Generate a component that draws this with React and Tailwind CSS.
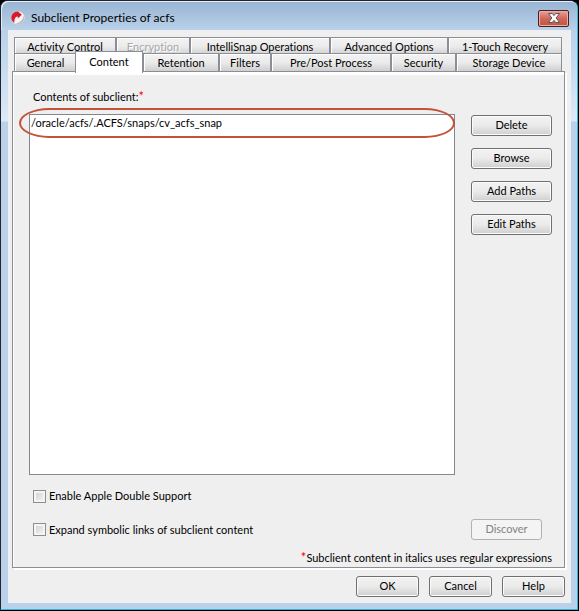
import React, { useState } from 'react';

const backTabs = ['Activity Control', 'Encryption', 'IntelliSnap Operations', 'Advanced Options', '1-Touch Recovery'];
const frontTabs = ['General', 'Content', 'Retention', 'Filters', 'Pre/Post Process', 'Security', 'Storage Device'];

function AppIcon() {
    return (
        <svg className="mt-[5px]" width="14" height="14" viewBox="0 0 14 14" aria-hidden="true">
            <circle cx="7" cy="7" r="6.6" fill="#f6f3f3" stroke="#cfd0d8" strokeWidth="0.5" />
            <path d="M4 13C6 14.2 10.6 13.8 12.6 10.4C13.6 8.4 13.4 6.2 12.4 4.6C12.2 8.8 9.2 11.6 4 13Z" fill="#c4bfc3" />
            <path d="M3.4 11.8C-0.6 9.8 -0.6 4.6 2.6 2C4 0.9 5.4 0.7 6.4 0.9V0L10.8 3.7L6.8 7.6V5.4C4.6 5.4 3 7.4 3.4 11.8Z" fill="#d9182a" />
        </svg>
    );
}

function CloseIcon() {
    return (
        <svg width="12" height="10" viewBox="0 0 12 10" aria-hidden="true">
            <path
                d="M0.5 0.5H4.2L6 2.6L7.8 0.5H11.5L8.2 5L11.5 9.5H7.8L6 7.4L4.2 9.5H0.5L3.8 5Z"
                fill="#fafafa"
                stroke="#5b5560"
                strokeWidth="1"
            />
        </svg>
    );
}

function Star() {
    return <span className="text-[13px] leading-none text-[#f00]">*</span>;
}

function PushButton({ children, className = '', disabled = false }) {
    const look = disabled
        ? 'border-[#adb2b5] bg-[#f4f4f4] text-[#838383]'
        : 'border-[#707070] bg-linear-to-b from-[#f2f2f2] from-0% via-[#ebebeb] via-49% to-[#cfcfcf] text-black shadow-[inset_0_0_0_1px_#fbfbfb]';
    return (
        <button
            type="button"
            disabled={disabled}
            className={`flex h-[21px] items-center justify-center rounded-[3px] border pb-px ${look} ${className}`}
        >
            {children}
        </button>
    );
}

function CheckBox({ children }) {
    return (
        <label className="flex items-center gap-[3px]">
            <input
                type="checkbox"
                className="size-[13px] appearance-none border border-[#8e8f8f] bg-linear-to-br from-[#cbcfd5] to-[#f6f6f6] shadow-[inset_0_0_0_2px_#f4f4f4] checked:bg-[#4a6a9a]"
            />
            {children}
        </label>
    );
}

function Tab({ name, active, disabled, onSelect }) {
    let look = 'border-t border-l-2 border-[#8c8e97] bg-linear-to-b from-[#f3f3f3] via-[#ebebeb] to-[#cfcfcf] pt-px shadow-[inset_1px_1px_0_#fff] first:border-l last:border-r';
    if (active) {
        look = 'relative z-10 -mx-px -mt-[2px] -mb-[2px] border border-b-0 border-[#8c8e97] bg-white pb-px';
    }
    return (
        <button
            type="button"
            role="tab"
            aria-selected={active}
            disabled={disabled}
            onClick={() => onSelect(name)}
            className={`flex items-center justify-center whitespace-nowrap disabled:text-[#a8a8a8] disabled:[text-shadow:1px_1px_0_#fff] ${look}`}
        >
            {name}
        </button>
    );
}

export default function App() {
    const [tab, setTab] = useState('Content');

    return (
        <div className="flex min-h-screen flex-col bg-black pr-px pb-px font-[Lato,sans-serif] text-[11px] leading-4 text-black [font-variant-ligatures:none]">
            <div className="flex grow flex-col rounded-t-lg border border-[#20242c] border-r-[#35b6cf] border-b-[#35b6cf] bg-[linear-gradient(#b9d1ea_30px,#dce9f8_120px,#b9d1ea_121px)] pr-[6px] pb-[6px] pl-[7px]">
                {/* Title bar */}
                <header className="-mr-[6px] -ml-[7px] flex h-[29px] items-center rounded-t-[7px] bg-linear-to-b from-[#98b4d2] to-[#b9d1ea] pr-[8px] pl-[10px] shadow-[inset_1px_1px_0_#e4eefa]">
                    <AppIcon />
                    <h1 className="ml-[6px] grow pt-1 text-[12px]">Subclient Properties of acfs</h1>
                    <button
                        type="button"
                        aria-label="Close"
                        className="mt-[5px] flex h-[17px] w-[31px] items-center justify-center rounded-[2px] border border-[#4c1c24] bg-linear-to-b from-[#e4a198] from-0% via-[#d0695a] via-49% to-[#c5543c] shadow-[inset_0_0_0_1px_#eab0a6]"
                    >
                        <CloseIcon />
                    </button>
                </header>

                <div className="flex grow flex-col bg-[#efefef] px-1 pt-[7px] pb-[6px]">
                    {/* Tabs */}
                    <div role="tablist" aria-label="Subclient properties" className="pr-[5px] pl-[2px]">
                        <div className="grid h-4 grid-cols-[101fr_74fr_140fr_118fr_115fr]">
                            {backTabs.map((name) => (
                                <Tab key={name} name={name} active={tab === name} disabled={name === 'Encryption'} onSelect={setTab} />
                            ))}
                        </div>
                        <div className="grid h-[18px] grid-cols-[62fr_66fr_76fr_52fr_120fr_65fr_107fr]">
                            {frontTabs.map((name) => (
                                <Tab key={name} name={name} active={tab === name} onSelect={setTab} />
                            ))}
                        </div>
                    </div>

                    <section
                        role="tabpanel"
                        aria-label={tab}
                        className="mr-[2px] flex grow flex-col border border-[#8c8e97] pr-3 pl-4 shadow-[inset_1px_3px_0_#fff,2px_2px_0_#fff]"
                    >
                        <label htmlFor="contents" className="mt-[17px] pl-1">
                            Contents of subclient:<Star />
                        </label>
                        <div className="mt-[9px] flex grow gap-4">
                            <div className="relative flex grow">
                                <select
                                    id="contents"
                                    multiple
                                    size={20}
                                    className="min-h-[360px] grow appearance-none overflow-hidden border border-[#828790] bg-white pt-px pl-px outline-none"
                                >
                                    <option className="p-0 leading-4">/oracle/acfs/.ACFS/snaps/cv_acfs_snap</option>
                                </select>
                                {/* Highlight ring */}
                                <div className="pointer-events-none absolute -top-[6px] right-0 -left-[10px] h-[30px] rounded-[30px/15px] border-2 border-[#c4513a]" />
                            </div>
                            <div className="flex w-[81px] flex-col gap-3 pt-px">
                                <PushButton>Delete</PushButton>
                                <PushButton>Browse</PushButton>
                                <PushButton>Add Paths</PushButton>
                                <PushButton>Edit Paths</PushButton>
                            </div>
                        </div>
                        <div className="mt-[13px] pl-1">
                            <CheckBox>Enable Apple Double Support</CheckBox>
                        </div>
                        <div className="mt-[15px] flex items-center justify-between pr-[10px] pl-1">
                            <CheckBox>Expand symbolic links of subclient content</CheckBox>
                            <PushButton className="w-[71px]" disabled>
                                Discover
                            </PushButton>
                        </div>
                        <p className="mt-[10px] mb-[1px] text-right">
                            <Star />Subclient content in italics uses regular expressions
                        </p>
                    </section>

                    {/* Dialog actions */}
                    <footer className="mt-2 flex justify-end gap-[10px] pr-[2px]">
                        <PushButton className="w-[63px]">OK</PushButton>
                        <PushButton className="w-[63px]">Cancel</PushButton>
                        <PushButton className="w-[63px]">Help</PushButton>
                    </footer>
                </div>
            </div>
        </div>
    );
}
